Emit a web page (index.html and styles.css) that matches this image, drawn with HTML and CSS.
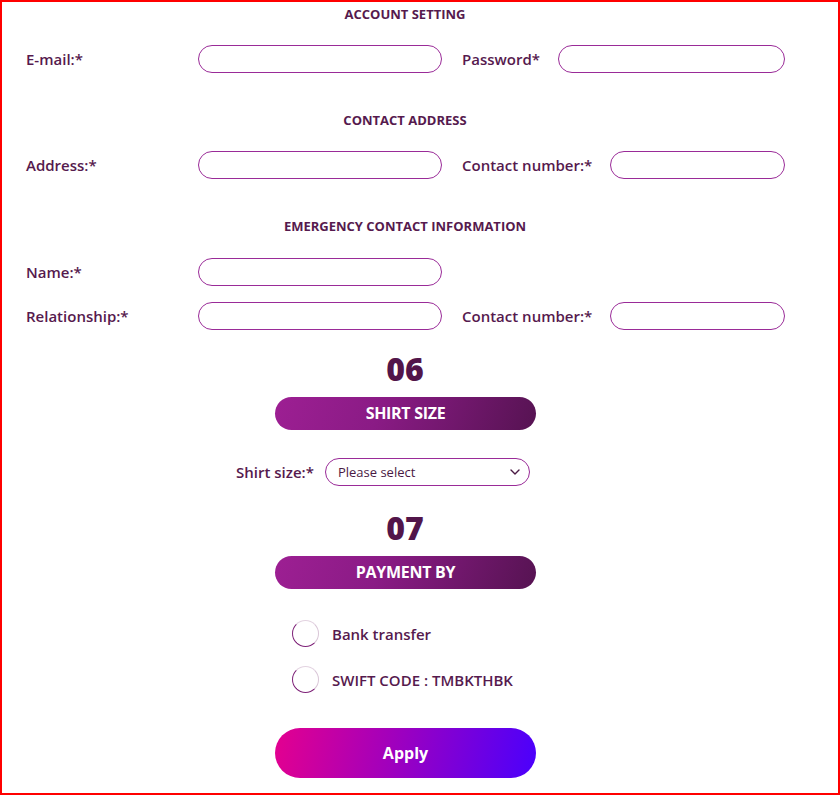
FILE: index.html
```html
<!DOCTYPE html>
<html lang="en">
<head>
  <meta charset="UTF-8">
  <meta name="viewport" content="width=device-width, initial-scale=1.0">
  <title>Registration</title>
  <link rel="stylesheet" href="styles.css">
</head>
<body>

<div class="page">

  <h3 class="section-title first">ACCOUNT SETTING</h3>
  <div class="form-row">
    <label class="label-main">E-mail:*</label>
    <input type="text" class="field field-main">
    <label class="label-side">Password*</label>
    <input type="password" class="field field-side">
  </div>

  <h3 class="section-title">CONTACT ADDRESS</h3>
  <div class="form-row">
    <label class="label-main">Address:*</label>
    <input type="text" class="field field-main">
    <label class="label-side">Contact number:*</label>
    <input type="text" class="field field-side">
  </div>

  <h3 class="section-title">EMERGENCY CONTACT INFORMATION</h3>
  <div class="form-row row-tight">
    <label class="label-main">Name:*</label>
    <input type="text" class="field field-main">
  </div>
  <div class="form-row row-next">
    <label class="label-main">Relationship:*</label>
    <input type="text" class="field field-main">
    <label class="label-side">Contact number:*</label>
    <input type="text" class="field field-side">
  </div>

  <div class="step-no step-six">06</div>
  <div class="step-bar">SHIRT SIZE</div>

  <div class="shirt-row">
    <label class="shirt-label">Shirt size:*</label>
    <div class="select-wrap">
      <select class="select-field">
        <option>Please select</option>
        <option>S</option>
        <option>M</option>
        <option>L</option>
        <option>XL</option>
      </select>
      <svg class="chevron" width="10" height="6" viewBox="0 0 10 6">
        <path d="M1 1 L5 5 L9 1" fill="none" stroke="#4a1a44" stroke-width="1.4" stroke-linecap="round" stroke-linejoin="round"/>
      </svg>
    </div>
  </div>

  <div class="step-no step-seven">07</div>
  <div class="step-bar">PAYMENT BY</div>

  <div class="pay-list">
    <label class="pay-option">
      <span class="radio"></span>
      <span>Bank transfer</span>
    </label>
    <label class="pay-option">
      <span class="radio"></span>
      <span>SWIFT CODE : TMBKTHBK</span>
    </label>
  </div>

  <button class="btn-apply">Apply</button>

</div>

</body>
</html>
```

FILE: styles.css
```css
* {
  box-sizing: border-box;
}

body {
  margin: 0;
  font-family: "Open Sans", Arial, sans-serif;
  color: #561a4e;
}

.page {
  width: 840px;
  height: 795px;
  border: 2px solid #ff0000;
  overflow: hidden;
}

.section-title {
  margin: 39px 0 0;
  padding-right: 30px;
  text-align: center;
  font-size: 13px;
  font-weight: 700;
  line-height: 16px;
}

.section-title.first {
  margin-top: 4px;
}

.form-row {
  display: flex;
  align-items: center;
  margin-top: 23px;
  padding-left: 24px;
  padding-right: 53px;
}

.row-tight {
  margin-top: 24px;
}

.row-next {
  margin-top: 16px;
}

.form-row label {
  font-size: 15px;
  font-weight: 600;
  white-space: nowrap;
  flex-shrink: 0;
}

.label-main {
  width: 172px;
}

.label-side {
  margin-left: 20px;
  margin-right: 18px;
}

.field {
  height: 28px;
  border: 1px solid #9a2b98;
  border-radius: 14px;
  outline: none;
  padding: 0 12px;
  font-family: inherit;
  background: #fff;
}

.field-main {
  flex: 0 0 244px;
  width: 244px;
}

.field-side {
  flex: 1;
  min-width: 0;
}

.step-no {
  text-align: center;
  padding-right: 30px;
  font-size: 32px;
  font-weight: 800;
  line-height: 36px;
  color: #52154a;
}

.step-six {
  margin-top: 21px;
}

.step-seven {
  margin-top: 24px;
}

.step-bar {
  width: 261px;
  height: 33px;
  margin: 10px 0 0 273px;
  border-radius: 17px;
  background: linear-gradient(110deg, #9d1f93 0%, #8a1b85 40%, #561352 100%);
  color: #fff;
  font-size: 16px;
  font-weight: 700;
  line-height: 33px;
  text-align: center;
  letter-spacing: -0.3px;
}

.shirt-row {
  display: flex;
  align-items: center;
  margin-top: 28px;
  padding-left: 234px;
}

.shirt-label {
  font-size: 15px;
  font-weight: 600;
  margin-right: 11px;
}

.select-wrap {
  position: relative;
  width: 205px;
}

.select-field {
  width: 100%;
  height: 28px;
  border: 1px solid #9a2b98;
  border-radius: 14px;
  padding: 0 12px;
  font-family: inherit;
  font-size: 13px;
  color: #4a1a44;
  background: #fff;
  appearance: none;
  -webkit-appearance: none;
  outline: none;
}

.chevron {
  position: absolute;
  right: 10px;
  top: 11px;
  pointer-events: none;
}

.pay-list {
  margin: 31px 0 0 290px;
}

.pay-option {
  display: flex;
  align-items: center;
  height: 27px;
  margin-bottom: 19px;
  font-size: 15px;
  font-weight: 600;
}

.pay-option:last-child {
  margin-bottom: 0;
}

.radio {
  width: 27px;
  height: 27px;
  border-radius: 50%;
  border: 1px solid;
  border-color: #e3d3e1 #d9c6d7 #7e2278 #7e2278;
  margin-right: 13px;
}

.btn-apply {
  display: block;
  width: 261px;
  height: 50px;
  margin: 35px 0 0 273px;
  border: none;
  border-radius: 25px;
  background: linear-gradient(100deg, #e4008f 0%, #a000bd 45%, #4a00fd 100%);
  color: #fff;
  font-family: inherit;
  font-size: 16px;
  font-weight: 700;
  cursor: pointer;
}
```
